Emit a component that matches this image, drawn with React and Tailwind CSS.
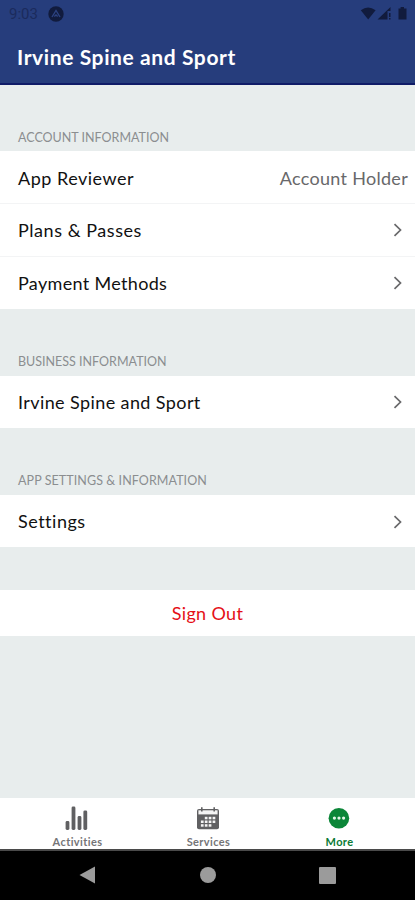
import React from "react";

function Chevron() {
  return (
    <svg width="10" height="14" viewBox="0 0 10 14" fill="none" stroke="#68686a" strokeWidth="1.7" className="mr-[12px]">
      <path d="M1.5 1.2 L7.5 7 L1.5 12.8" />
    </svg>
  );
}

function SectionTitle({ children, className }) {
  return (
    <h2 className={"flex items-end pl-[18px] text-[12.5px] leading-[16px] text-[#8b8e90] " + className}>
      {children}
    </h2>
  );
}

function Row({ label, spacing, height, border, children }) {
  return (
    <div className={"flex items-center justify-between pl-[18px] text-[18px] text-[#111] " + height + (border ? " border-b border-[#f3f4f5]" : "")}>
      <span className={spacing}>{label}</span>
      {children}
    </div>
  );
}

function ActivitiesIcon() {
  return (
    <svg width="24" height="26" viewBox="0 0 24 26" fill="#606062">
      <rect x="0.6" y="16" width="3.8" height="9" rx="1.4" />
      <rect x="6.6" y="1.6" width="3.8" height="23.4" rx="1.4" />
      <rect x="12.6" y="11" width="3.8" height="14" rx="1.4" />
      <rect x="18.4" y="5.4" width="3.8" height="19.6" rx="1.4" />
    </svg>
  );
}

function CalendarIcon() {
  return (
    <svg width="24" height="26" viewBox="0 0 24 26">
      <rect x="1" y="4" width="22" height="20.2" rx="2" fill="#606062" />
      <path d="M2.4 5.3 H21.6 V9.4 H2.4Z" fill="#f4f4f4" />
      <path d="M5.8 2.2 V6.4 M18.2 2.2 V6.4" stroke="#606062" strokeWidth="1.6" />
      <g fill="#f4f4f4">
        <rect x="8.8" y="11.8" width="2.7" height="2.5" />
        <rect x="12.7" y="11.8" width="2.7" height="2.5" />
        <rect x="16.6" y="11.8" width="2.7" height="2.5" />
        <rect x="4.9" y="15.5" width="2.7" height="2.5" />
        <rect x="8.8" y="15.5" width="2.7" height="2.5" />
        <rect x="12.7" y="15.5" width="2.7" height="2.5" />
        <rect x="16.6" y="15.5" width="2.7" height="2.5" />
        <rect x="4.9" y="19.2" width="2.7" height="2.5" />
        <rect x="8.8" y="19.2" width="2.7" height="2.5" />
        <rect x="12.7" y="19.2" width="2.7" height="2.5" />
      </g>
    </svg>
  );
}

function MoreIcon() {
  return (
    <svg width="24" height="26" viewBox="0 0 24 26">
      <circle cx="11.9" cy="13.3" r="10.3" fill="#0b8638" />
      <g fill="#e4f5e9">
        <circle cx="7.4" cy="13.1" r="1.6" />
        <circle cx="12" cy="13.1" r="1.6" />
        <circle cx="16.6" cy="13.1" r="1.6" />
      </g>
    </svg>
  );
}

function Tab({ icon, label, color }) {
  return (
    <div className={"flex w-[131px] flex-col items-center pt-[7px] text-[11px] leading-[14px] font-bold tracking-[0.4px] " + color}>
      {icon}
      <span className="mt-[4px] pl-[2px]">{label}</span>
    </div>
  );
}

export default function App() {
  return (
    <div className="flex h-[900px] w-[415px] flex-col overflow-hidden bg-[#e8eded] font-['Lato',sans-serif]">
      <header className="h-[85px] shrink-0 border-b-2 border-[#101c68] bg-[#263d7c]">
        <div className="flex h-[28px] items-center pl-[9px] pr-[7px]">
          <span className="font-['Roboto',sans-serif] text-[15px] text-[#1b2b5c]">9:03</span>
          <svg width="16" height="16" viewBox="0 0 16 16" className="ml-[10px]">
            <circle cx="8" cy="8" r="7.7" fill="#111b3d" />
            <path d="M4 11 L8 4.5 L12 11 M6.3 10.5 L8 9 L9.7 10.5" fill="none" stroke="#2c4281" strokeWidth="1.4" />
          </svg>
          <svg width="48" height="16" viewBox="0 0 48 16" className="ml-auto" fill="#111b3d">
            <path d="M0.8 4.2 Q8 -1.4 15.6 4.2 L8.2 13.5Z" />
            <path d="M17.5 13.5 L30.5 1 V5 H27.5 V13.5Z" />
            <path d="M29 7 h1.5 v4 h-1.5z M29 12 h1.5 v1.5 h-1.5z" />
            <path d="M38.5 2.4 H40.6 V1 H44 V2.4 H46.5 V13.5 H38.5Z" />
          </svg>
        </div>
        <h1 className="pl-[17px] pt-[14px] text-[21px] leading-[30px] font-bold tracking-[0.6px] text-white">Irvine Spine and Sport</h1>
      </header>

      <main className="flex min-h-0 flex-1 flex-col">
        <SectionTitle className="h-[66px] pb-[5px]">ACCOUNT INFORMATION</SectionTitle>
        <div className="bg-white">
          <Row label="App Reviewer" height="h-[53px] pt-[2px]" spacing="tracking-[0.5px]" border>
            <span className="pr-[7px] tracking-[0.3px] text-[#68686a]">Account Holder</span>
          </Row>
          <Row label="Plans & Passes" height="h-[53px]" spacing="tracking-[0.55px]" border><Chevron /></Row>
          <Row label="Payment Methods" height="h-[52px]" spacing="tracking-[0.33px]"><Chevron /></Row>
        </div>
        <SectionTitle className="h-[67px] pb-[6px]">BUSINESS INFORMATION</SectionTitle>
        <div className="bg-white">
          <Row label="Irvine Spine and Sport" height="h-[52px]" spacing="tracking-[0.4px]"><Chevron /></Row>
        </div>
        <SectionTitle className="h-[67px] pb-[6px] tracking-[0.08px]">APP SETTINGS &amp; INFORMATION</SectionTitle>
        <div className="bg-white">
          <Row label="Settings" height="h-[52px] pt-[1px]" spacing="tracking-[0.5px]"><Chevron /></Row>
        </div>
        <button className="mt-[43px] h-[46px] bg-white pt-[1px] text-[18px] tracking-[0.35px] text-[#e50f17]">Sign Out</button>
      </main>

      <nav className="flex h-[53px] shrink-0 justify-center border-b-2 border-[#4a4a4a] bg-white">
        <Tab icon={<ActivitiesIcon />} label="Activities" color="text-[#757577]" />
        <Tab icon={<CalendarIcon />} label="Services" color="text-[#757577]" />
        <Tab icon={<MoreIcon />} label="More" color="text-[#0b7a35]" />
      </nav>

      <footer className="flex h-[49px] shrink-0 justify-center bg-black pb-[1px]">
        <div className="flex w-[120px] items-center justify-center">
          <svg width="18" height="18" viewBox="0 0 18 18"><path d="M0.5 9 L16 0.5 V17.5Z" fill="#9b9b9b" /></svg>
        </div>
        <div className="flex w-[120px] items-center justify-center">
          <div className="size-[16px] rounded-full bg-[#9b9b9b]" />
        </div>
        <div className="flex w-[120px] items-center justify-center">
          <div className="size-[17px] rounded-[1px] bg-[#9b9b9b]" />
        </div>
      </footer>
    </div>
  );
}
